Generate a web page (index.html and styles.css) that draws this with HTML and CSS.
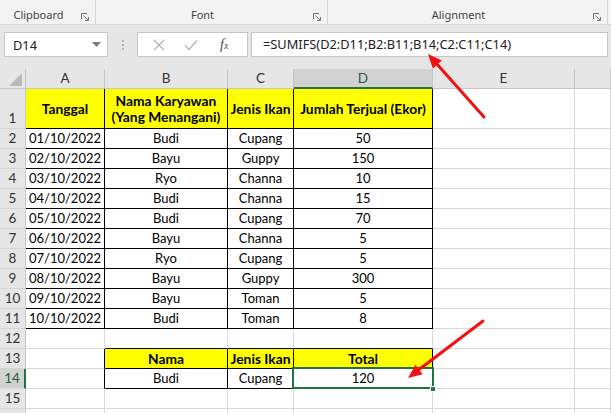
FILE: index.html
```html
<!DOCTYPE html>
<html>
<head>
<meta charset="utf-8">
<link rel="stylesheet" href="styles.css">
</head>
<body>
<div class="app">
  <div class="ribbon">
    <div class="grp g1"><span class="glabel">Clipboard</span><svg class="launch" width="9" height="9" viewBox="0 0 9 9"><path d="M0.5 6V0.5H6" fill="none" stroke="#707070"/><path d="M2.5 2.5L7 7M4 7.5H7.5V4" fill="none" stroke="#707070"/></svg></div>
    <div class="grp g2"><span class="glabel">Font</span><svg class="launch" width="9" height="9" viewBox="0 0 9 9"><path d="M0.5 6V0.5H6" fill="none" stroke="#707070"/><path d="M2.5 2.5L7 7M4 7.5H7.5V4" fill="none" stroke="#707070"/></svg></div>
    <div class="grp g3"><span class="glabel">Alignment</span><svg class="launch" width="9" height="9" viewBox="0 0 9 9"><path d="M0.5 6V0.5H6" fill="none" stroke="#707070"/><path d="M2.5 2.5L7 7M4 7.5H7.5V4" fill="none" stroke="#707070"/></svg></div>
  </div>

  <div class="fbar">
    <div class="namebox"><span>D14</span><svg width="9" height="5" viewBox="0 0 9 5"><path d="M0 0H9L4.5 5Z" fill="#7a7a7a"/></svg></div>
    <div class="dots"><i></i><i></i><i></i></div>
    <div class="fxbox">
      <svg width="12" height="12" viewBox="0 0 12 12"><path d="M1 1L11 11M11 1L1 11" stroke="#b4b4b4" stroke-width="1.3"/></svg>
      <svg width="14" height="12" viewBox="0 0 14 12"><path d="M1 6.5L5 10.5L13 1.5" fill="none" stroke="#b4b4b4" stroke-width="1.3"/></svg>
      <span class="fx">f<small>x</small></span>
    </div>
    <div class="formula">=SUMIFS(D2:D11;B2:B11;B14;C2:C11;C14)</div>
  </div>

  <div class="sheet">
    <div class="corner"><svg width="13" height="13" viewBox="0 0 13 13"><path d="M13 0V13H0Z" fill="#b9b9b9"/></svg></div>
    <div class="ch">A</div><div class="ch">B</div><div class="ch">C</div><div class="ch sel">D</div><div class="ch">E</div><div class="ch"></div>

    <div class="rh">1</div>
    <div class="c y b mid r d">Tanggal</div>
    <div class="c y b mid r d">Nama Karyawan<br>(Yang Menangani)</div>
    <div class="c y b mid r d">Jenis Ikan</div>
    <div class="c y b mid r d">Jumlah Terjual (Ekor)</div>
    <div class="c"></div><div class="c"></div>

    <div class="rh">2</div>
    <div class="c r d">01/10/2022</div><div class="c r d">Budi</div><div class="c r d">Cupang</div><div class="c r d">50</div><div class="c"></div><div class="c"></div>
    <div class="rh">3</div>
    <div class="c r d">02/10/2022</div><div class="c r d">Bayu</div><div class="c r d">Guppy</div><div class="c r d">150</div><div class="c"></div><div class="c"></div>
    <div class="rh">4</div>
    <div class="c r d">03/10/2022</div><div class="c r d">Ryo</div><div class="c r d">Channa</div><div class="c r d">10</div><div class="c"></div><div class="c"></div>
    <div class="rh">5</div>
    <div class="c r d">04/10/2022</div><div class="c r d">Budi</div><div class="c r d">Channa</div><div class="c r d">15</div><div class="c"></div><div class="c"></div>
    <div class="rh">6</div>
    <div class="c r d">05/10/2022</div><div class="c r d">Budi</div><div class="c r d">Cupang</div><div class="c r d">70</div><div class="c"></div><div class="c"></div>
    <div class="rh">7</div>
    <div class="c r d">06/10/2022</div><div class="c r d">Bayu</div><div class="c r d">Channa</div><div class="c r d">5</div><div class="c"></div><div class="c"></div>
    <div class="rh">8</div>
    <div class="c r d">07/10/2022</div><div class="c r d">Ryo</div><div class="c r d">Cupang</div><div class="c r d">5</div><div class="c"></div><div class="c"></div>
    <div class="rh">9</div>
    <div class="c r d">08/10/2022</div><div class="c r d">Bayu</div><div class="c r d">Guppy</div><div class="c r d">300</div><div class="c"></div><div class="c"></div>
    <div class="rh">10</div>
    <div class="c r d">09/10/2022</div><div class="c r d">Bayu</div><div class="c r d">Toman</div><div class="c r d">5</div><div class="c"></div><div class="c"></div>
    <div class="rh">11</div>
    <div class="c r d">10/10/2022</div><div class="c r d">Budi</div><div class="c r d">Toman</div><div class="c r d">8</div><div class="c"></div><div class="c"></div>

    <div class="rh">12</div>
    <div class="c"></div><div class="c d"></div><div class="c d"></div><div class="c d"></div><div class="c"></div><div class="c"></div>
    <div class="rh">13</div>
    <div class="c r"></div><div class="c y b r d">Nama</div><div class="c y b r d">Jenis Ikan</div><div class="c y b r d">Total</div><div class="c"></div><div class="c"></div>
    <div class="rh sel">14</div>
    <div class="c r"></div><div class="c r d">Budi</div><div class="c r d">Cupang</div><div class="c r d active">120<span class="selbox"></span><span class="handle"></span></div><div class="c"></div><div class="c"></div>
    <div class="rh">15</div>
    <div class="c"></div><div class="c"></div><div class="c"></div><div class="c"></div><div class="c"></div><div class="c"></div>
    <div class="rh"></div>
    <div class="c"></div><div class="c"></div><div class="c"></div><div class="c"></div><div class="c"></div><div class="c"></div>
  </div>

  <svg class="arrows" width="611" height="413" viewBox="0 0 611 413">
    <path d="M484 117L437.3 64.5" stroke="#f21010" stroke-width="3" stroke-linecap="round"/>
    <path d="M428 54L441.8 60.5L432.8 68.5Z" fill="#f21010"/>
    <path d="M483 321L419.1 369.5" stroke="#f21010" stroke-width="3" stroke-linecap="round"/>
    <path d="M408 378L422.7 374.3L415.5 364.7Z" fill="#f21010"/>
  </svg>
</div>
</body>
</html>
```

FILE: styles.css
```css
* { box-sizing: border-box; }
html, body { margin: 0; padding: 0; }
body { width: 611px; height: 413px; overflow: hidden; background: #fff; }

.app { position: relative; width: 611px; height: 413px; overflow: hidden; }

.ribbon {
  height: 25px;
  background: #f3f3f3;
  border-bottom: 1px solid #d6d6d6;
  display: flex;
  font-family: "Noto Sans", "Open Sans", sans-serif;
  font-size: 11px;
  color: #444;
}
.grp {
  position: relative;
  display: flex;
  align-items: center;
  justify-content: center;
  padding-right: 18px;
  padding-top: 5px;
  border-right: 1px solid #d6d6d6;
}
.g1 { width: 96px; }
.g2 { width: 232px; }
.g3 { width: 280px; }
.launch { position: absolute; right: 5px; top: 13px; }

.fbar {
  height: 44px;
  background: #e6e6e6;
  display: flex;
  align-items: flex-start;
  padding-top: 7px;
  padding-left: 4px;
}
.namebox {
  width: 104px;
  height: 25px;
  background: #fff;
  border: 1px solid #c6c6c6;
  display: flex;
  align-items: center;
  justify-content: space-between;
  padding: 0 6px 0 8px;
  font-family: "Noto Sans", sans-serif;
  font-size: 12.8px;
  color: #222;
}
.dots {
  width: 29px;
  height: 25px;
  display: flex;
  flex-direction: column;
  align-items: center;
  justify-content: center;
  gap: 2px;
}
.dots i { display: block; width: 2px; height: 2px; background: #b3b3b3; }
.fxbox {
  width: 111px;
  height: 25px;
  background: #fff;
  border: 1px solid #c6c6c6;
  display: flex;
  align-items: center;
  padding: 0 0 0 15px;
  gap: 19px;
}
.fx {
  font-family: "Liberation Serif", serif;
  font-style: italic;
  font-size: 14px;
  color: #4a4a4a;
  margin-left: 3px;
}
.fx small { font-size: 10px; }
.formula {
  margin-left: 3px;
  width: 357px;
  height: 25px;
  background: #fff;
  border: 1px solid #c6c6c6;
  font-family: "Noto Sans", sans-serif;
  font-size: 12.8px;
  color: #222;
  line-height: 23px;
  padding-left: 11px;
  white-space: nowrap;
}

.sheet {
  display: grid;
  grid-template-columns: 26px 79px 123px 66px 139px 142px 36px;
  grid-template-rows: 20px 40px repeat(15, 20px);
  font-family: Lato, "Liberation Sans", sans-serif;
  font-size: 13px;
  color: #000;
}
.corner {
  background: #e6e6e6;
  border-right: 1px solid #c6c6c6;
  border-bottom: 1px solid #c6c6c6;
  display: flex;
  align-items: flex-end;
  justify-content: flex-end;
  padding: 0 3px 2px 0;
}
.ch {
  background: #e6e6e6;
  border-right: 1px solid #c6c6c6;
  border-bottom: 1px solid #c6c6c6;
  text-align: center;
  line-height: 19px;
  font-size: 13.5px;
  color: #333;
}
.ch.sel {
  background: #d2d2d2;
  border-bottom: 2px solid #217346;
  color: #1f5c39;
}
.rh {
  background: #e6e6e6;
  border-right: 1px solid #c6c6c6;
  border-bottom: 1px solid #d4d4d4;
  text-align: center;
  display: flex;
  align-items: flex-end;
  justify-content: center;
  line-height: 19px;
  color: #333;
  font-size: 13.5px;
}
.rh.sel {
  background: #d2d2d2;
  border-right: 2px solid #217346;
  color: #1f5c39;
}
.c {
  border-right: 1px solid #d9d9d9;
  border-bottom: 1px solid #d9d9d9;
  text-align: center;
  line-height: 19px;
  white-space: nowrap;
  display: flex;
  align-items: flex-end;
  justify-content: center;
}
.c.mid { align-items: center; line-height: 16px; }
.y { background: #ffff00; }
.b { font-weight: 700; font-size: 13.8px; }
.r { border-right-color: #000; }
.d { border-bottom-color: #000; }

.active { position: relative; }
.selbox {
  position: absolute;
  left: -2px;
  top: -2px;
  right: -2px;
  bottom: -1px;
  border: 2px solid #217346;
}
.handle {
  position: absolute;
  right: -4px;
  bottom: -4px;
  width: 6px;
  height: 6px;
  background: #217346;
  border: 1px solid #fff;
}

.arrows { position: absolute; left: 0; top: 0; pointer-events: none; }
```
